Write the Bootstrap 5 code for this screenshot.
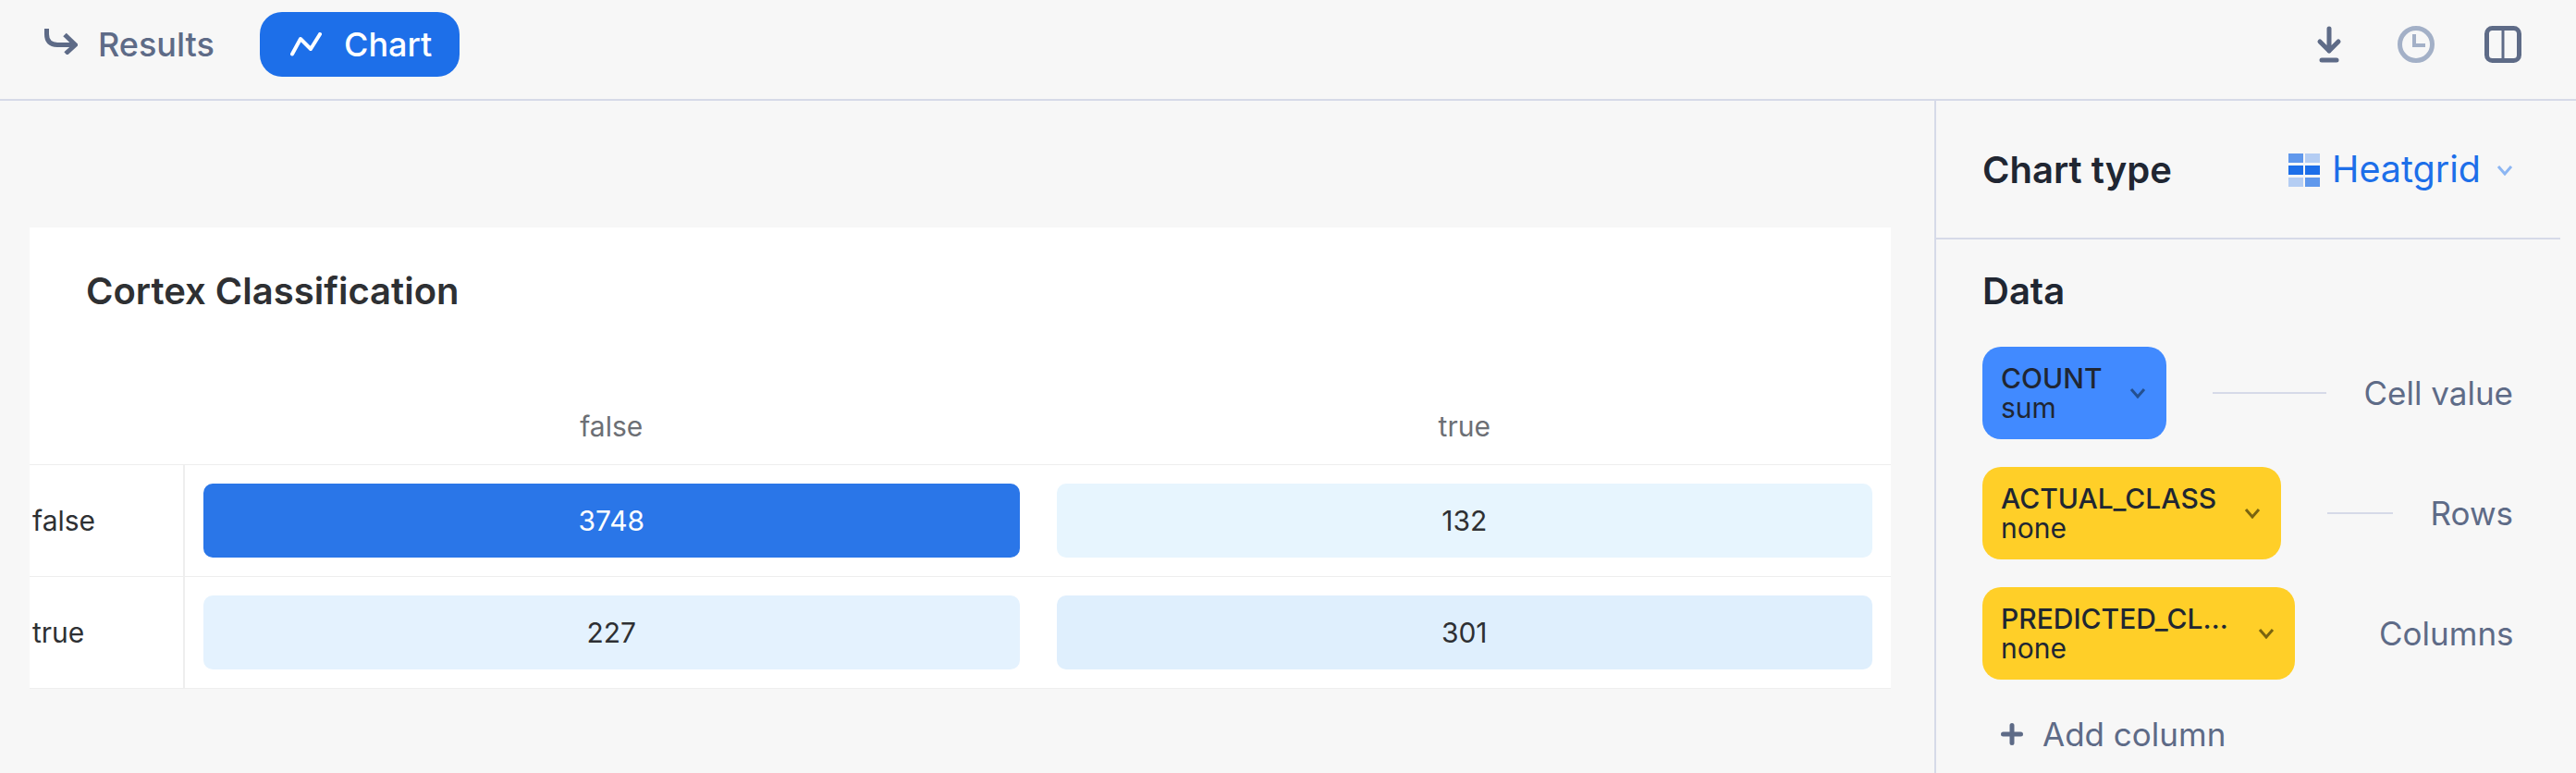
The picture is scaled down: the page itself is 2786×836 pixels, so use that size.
<!DOCTYPE html>
<html lang="en">
<head>
<meta charset="utf-8">
<title>Chart</title>
<link href="https://cdn.jsdelivr.net/npm/bootstrap@5.3.0/dist/css/bootstrap.min.css" rel="stylesheet">
<style>
html,body{height:836px;overflow:hidden;background:#f7f7f7;}
body{font-family:Inter,"Liberation Sans",sans-serif;color:#2e3033;}
.topbar{height:109px;padding:14px 59px 25px 48px;border-bottom:2px solid #d6dae8;}
.tab-plain,.tab-active{font-size:36px;font-weight:500;line-height:70px;height:70px;border:0;padding:0;--bs-btn-border-width:0;}
.tab-plain{color:#5e6b87;width:233px;justify-content:flex-start;gap:22px;}
.tab-plain svg{margin-top:-6px;}
.tab-active{background:#1d6fe9;color:#fff;width:216px;border-radius:24px;padding-left:33px;gap:24px;}
.tab-active:hover,.tab-active:active{background:#1d6fe9!important;color:#fff!important;}
.icon-gap{gap:54px;}
.main-area{height:727px;}
.chart-pane{padding:137px 47px 0 32px;}
.chart-panel{background:#fff;}
.chart-title{font-size:40px;font-weight:600;line-height:48px;height:175px;padding:45px 0 0 61px;color:#2e3033;}
.heat-table{--bs-table-bg:transparent;--bs-table-border-color:#eeeeee;table-layout:fixed;border-collapse:separate;border-spacing:0;margin:0;font-size:30px;width:100%;}
.heat-table>*>*>*{border-bottom:2px solid #eeeeee;padding:0;vertical-align:middle;}
.heat-table .corner-col{width:168px;}
.heat-table th{height:82px;font-weight:400;color:#6c6f75;text-align:center;}
.heat-table .row-head{border-right:2px solid #eeeeee;padding-left:3px;color:#2e3033;font-weight:400;text-align:left;}
.heat-table td{padding:20px;text-align:center;color:#2e3033;}
.heat-cell{height:80px;border-radius:10px;display:flex;align-items:center;justify-content:center;}
.cell-top{background:#2a76e8;color:#fff;}
.cell-a{background:#e7f5fe;}
.cell-b{background:#e4f2fe;}
.cell-c{background:#dfeffd;}
.side-pane{width:694px;border-left:2px solid #d6dae8;flex:none;padding-right:17px;}
.type-row{height:150px;padding:2px 51px 0 50px;border-bottom:2px solid #d6dae8;}
.side-head{font-size:40px;font-weight:600;color:#202632;}
.type-pick{font-size:39.500px;color:#1d6fe9;gap:13px;}
.grid-icon{display:grid;grid-template-columns:16px 16px;grid-auto-rows:10px;gap:3px 2px;}
.gi-m{background:#6098ec}.gi-l{background:#b4cdf3}.gi-d{background:#1d6fe9}
.type-chev{margin-left:4px;}
.data-area{padding:34px 51px 0 50px;}
.data-head{line-height:44px;margin-bottom:38px;}
.field-row{height:100px;margin-bottom:30px;}
.field-pill{height:100px;border-radius:20px;padding:0 22px 0 20px;gap:30px;flex:none;font-size:30px;line-height:32px;color:#202632;}
.pill-blue{background:#418aff;}
.pill-yellow{background:#ffcf28;}
.pill-name{white-space:nowrap;font-weight:500;}
.pill-long{min-width:248px;}
.pill-sub{font-weight:400;}
.chev-blue{color:#24508f;}
.chev-gold{color:#7a6410;}
.conn{flex:1 1 0;min-width:0;height:2px;background:#d6dae8;margin:0 41px 0 50px;}
.conn-none{background:transparent;}
.role-name{font-size:35px;color:#5e6b87;flex:none;}
.add-col{font-size:35px;color:#5e6b87;gap:21px;padding-left:20px;margin-top:33px;}
</style>
</head>
<body>
<div class="topbar d-flex align-items-center justify-content-between">
  <div class="d-flex align-items-center">
    <button type="button" class="btn tab-plain d-flex align-items-center">
      <svg width="36" height="28" viewBox="0 0 36 28" fill="none" stroke="currentColor" stroke-width="5"><path d="M2.5 0V6Q2.5 17 14 17.500H33"/><path d="M22 6.500 33.500 17.500 23 27"/></svg>
      <span>Results</span>
    </button>
    <button type="button" class="btn tab-active d-flex align-items-center">
      <svg width="34" height="26" viewBox="0 0 34 26" fill="none" stroke="#fff" stroke-width="4" stroke-linecap="round" stroke-linejoin="round"><path d="M2 23.500 11 7 22 18 32 2"/></svg>
      <span>Chart</span>
    </button>
  </div>
  <div class="d-flex align-items-center icon-gap">
    <svg width="40" height="40" viewBox="0 0 40 40" fill="none" stroke="#5e6b87" stroke-width="5" stroke-linecap="round" stroke-linejoin="round"><path d="M20 3V27M10 17 20 27 30 17"/><path d="M12 37H28"/></svg>
    <svg width="40" height="40" viewBox="0 0 40 40" fill="none" stroke="#a3b0c7"><circle cx="20" cy="20" r="17.500" stroke-width="5"/><path d="M18 9V21H30" stroke-width="4"/></svg>
    <svg width="40" height="40" viewBox="0 0 40 40" fill="none" stroke="#5e6b87"><rect x="2.500" y="2.500" width="35" height="35" rx="6" stroke-width="5"/><path d="M20 3V37" stroke-width="3"/></svg>
  </div>
</div>
<div class="main-area d-flex">
  <div class="chart-pane flex-grow-1">
    <div class="chart-panel">
      <div class="chart-title">Cortex Classification</div>
      <table class="table heat-table">
        <thead>
          <tr><th class="corner-col"></th><th>false</th><th>true</th></tr>
        </thead>
        <tbody>
          <tr>
            <th class="row-head" scope="row">false</th>
            <td><div class="heat-cell cell-top">3748</div></td>
            <td><div class="heat-cell cell-a">132</div></td>
          </tr>
          <tr>
            <th class="row-head" scope="row">true</th>
            <td><div class="heat-cell cell-b">227</div></td>
            <td><div class="heat-cell cell-c">301</div></td>
          </tr>
        </tbody>
      </table>
    </div>
  </div>
  <div class="side-pane">
    <div class="type-row d-flex align-items-center justify-content-between">
      <div class="side-head">Chart type</div>
      <div class="type-pick d-flex align-items-center">
        <div class="grid-icon"><i class="gi-m"></i><i class="gi-l"></i><i class="gi-d"></i><i class="gi-d"></i><i class="gi-l"></i><i class="gi-m"></i></div>
        <span>Heatgrid</span>
        <svg class="type-chev" width="18" height="12" viewBox="0 0 18 12" fill="none" stroke="#8cb6f3" stroke-width="3"><path d="M2 2 9 10 16 2"/></svg>
      </div>
    </div>
    <div class="data-area">
      <div class="side-head data-head">Data</div>
      <div class="field-row d-flex align-items-center">
        <div class="field-pill pill-blue d-flex align-items-center">
          <div><div class="pill-name">COUNT</div><div class="pill-sub">sum</div></div>
          <svg class="chev-blue" width="18" height="12" viewBox="0 0 18 12" fill="none" stroke="currentColor" stroke-width="3"><path d="M2 2 9 10 16 2"/></svg>
        </div>
        <div class="conn"></div>
        <div class="role-name">Cell value</div>
      </div>
      <div class="field-row d-flex align-items-center">
        <div class="field-pill pill-yellow d-flex align-items-center">
          <div><div class="pill-name">ACTUAL_CLASS</div><div class="pill-sub">none</div></div>
          <svg class="chev-gold" width="18" height="12" viewBox="0 0 18 12" fill="none" stroke="currentColor" stroke-width="3"><path d="M2 2 9 10 16 2"/></svg>
        </div>
        <div class="conn"></div>
        <div class="role-name">Rows</div>
      </div>
      <div class="field-row d-flex align-items-center">
        <div class="field-pill pill-yellow d-flex align-items-center">
          <div class="pill-long"><div class="pill-name">PREDICTED_CL…</div><div class="pill-sub">none</div></div>
          <svg class="chev-gold" width="18" height="12" viewBox="0 0 18 12" fill="none" stroke="currentColor" stroke-width="3"><path d="M2 2 9 10 16 2"/></svg>
        </div>
        <div class="conn conn-none"></div>
        <div class="role-name">Columns</div>
      </div>
      <div class="add-col d-flex align-items-center">
        <svg width="24" height="24" viewBox="0 0 24 24" fill="none" stroke="#5e6b87" stroke-width="5" stroke-linecap="round"><path d="M12 2.500V21.500M2.500 12H21.500"/></svg>
        <span>Add column</span>
      </div>
    </div>
  </div>
</div>
<script src="https://cdn.jsdelivr.net/npm/bootstrap@5.3.0/dist/js/bootstrap.bundle.min.js"></script>
</body>
</html>
